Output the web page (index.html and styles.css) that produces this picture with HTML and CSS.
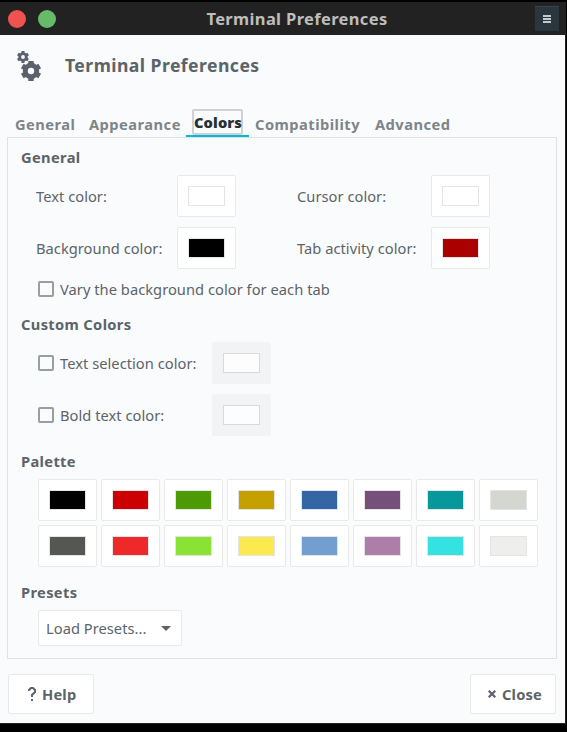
FILE: index.html
```html
<!DOCTYPE html>
<html lang="en">
<head>
<meta charset="utf-8">
<title>Terminal Preferences</title>
<link rel="stylesheet" href="styles.css">
</head>
<body>
<div class="window">
  <header class="titlebar">
    <div class="dots"><i class="dot red"></i><i class="dot green"></i></div>
    <span class="window-title">Terminal Preferences</span>
    <button class="menu-btn"><svg width="8" height="8"><path d="M0 1h8M0 4h8M0 7h8" stroke="#c4c8ca" stroke-width="2"/></svg></button>
  </header>
  <main class="content">
    <div class="heading">
      <svg class="gears" width="28" height="32" viewBox="0 0 28 32" fill="none" stroke="#5c616c">
        <circle cx="8" cy="7" r="3.3" stroke-width="2.8"/>
        <path d="M8 1v3M8 10v3M2.8 4l2.4 1.4M10.8 8.6l2.4 1.4M2.8 10l2.4-1.4M10.8 5.4l2.4-1.4" stroke-width="3"/>
        <circle cx="16" cy="21" r="5.7" stroke-width="5"/>
        <path d="M16 11v6M16 25v6M7.3 16l5 2.9M19.7 23.1l5 2.9M7.3 26l5-2.9M19.7 18.9l5-2.9" stroke-width="5.4"/>
      </svg>
      <h1>Terminal Preferences</h1>
    </div>
    <nav class="tabs">
      <span class="tab t-general">General</span>
      <span class="tab t-appearance">Appearance</span>
      <span class="tab active"><b>Colors</b></span>
      <span class="tab t-compat">Compatibility</span>
      <span class="tab t-advanced">Advanced</span>
    </nav>
    <section class="panel">
      <h2>General</h2>
      <div class="color-grid">
        <span>Text color:</span><button class="cb"><i class="white"></i></button>
        <span>Cursor color:</span><button class="cb"><i class="white"></i></button>
        <span>Background color:</span><button class="cb"><i class="black"></i></button>
        <span>Tab activity color:</span><button class="cb"><i class="darkred"></i></button>
      </div>
      <label class="check vary"><i class="box"></i><span>Vary the background color for each tab</span></label>
      <h2>Custom Colors</h2>
      <div class="custom">
        <label class="check"><i class="box"></i><span>Text selection color:</span></label><button class="cb off"><i></i></button>
        <label class="check"><i class="box"></i><span>Bold text color:</span></label><button class="cb off"><i></i></button>
      </div>
      <h2>Palette</h2>
      <div class="palette">
        <button class="cb"><i class="p0"></i></button><button class="cb"><i class="p1"></i></button><button class="cb"><i class="p2"></i></button><button class="cb"><i class="p3"></i></button><button class="cb"><i class="p4"></i></button><button class="cb"><i class="p5"></i></button><button class="cb"><i class="p6"></i></button><button class="cb"><i class="p7"></i></button>
        <button class="cb"><i class="p8"></i></button><button class="cb"><i class="p9"></i></button><button class="cb"><i class="p10"></i></button><button class="cb"><i class="p11"></i></button><button class="cb"><i class="p12"></i></button><button class="cb"><i class="p13"></i></button><button class="cb"><i class="p14"></i></button><button class="cb"><i class="p15"></i></button>
      </div>
      <h2>Presets</h2>
      <button class="select"><span>Load Presets...</span><svg width="10" height="5"><path d="M0 0h10L5 5z" fill="#5c616c"/></svg></button>
    </section>
    <footer class="actions">
      <button class="action"><svg width="8" height="14" fill="none" stroke="#5c616c" stroke-width="2"><path d="M1 4V3l2-2h2l2 2v2L4 8v2M3 13h2"/></svg><span>Help</span></button>
      <button class="action close"><svg width="8" height="8" stroke="#5c616c" stroke-width="2.2"><path d="M.7.7l6.6 6.6M7.3.7L.7 7.3"/></svg><span>Close</span></button>
    </footer>
  </main>
</div>
</body>
</html>
```
FILE: styles.css
```css
* { box-sizing: border-box; }
body { margin: 0; width: 567px; height: 732px; background: #000; overflow: hidden; font: 14.67px/20px "Noto Sans", "Open Sans", sans-serif; letter-spacing: 0.04px; color: #5c616c; }
h1, h2 { margin: 0; }
button { margin: 0; padding: 0; font: inherit; letter-spacing: inherit; color: inherit; background: #fff; border: 1px solid #e8eaea; border-radius: 2px; }
i { display: block; }
svg { display: block; flex: none; }
span { white-space: nowrap; }
.window { width: 566px; height: 724px; padding-top: 2px; background: #000; }
.titlebar { height: 33px; background: #222; display: grid; grid-template-columns: 83px 1fr 57px; align-items: center; padding: 0 6px 0 8px; }
.dots { display: flex; gap: 12px; }
.dot { width: 18px; height: 18px; border-radius: 50%; }
.red { background: #ef5350; }
.green { background: #66bb6a; }
.window-title { text-align: center; font-weight: 700; font-size: 16.5px; letter-spacing: 0.35px; color: #bdbdbd; }
.menu-btn { justify-self: end; width: 24px; height: 25px; margin-right: 1px; border: 0; border-top: 1px solid #37474f; border-radius: 0; background: #2a363d; display: grid; place-items: center; }
.content { height: 689px; border: solid #222; border-width: 0 1px 1px 0; background: #fafbfd; padding: 15px 8px 0 7px; color: #5b6467; }
.heading { height: 58px; display: flex; align-items: flex-start; padding-left: 8px; }
.heading h1 { margin-left: 22px; font-size: 17.6px; line-height: 30px; letter-spacing: 0.45px; }
.tabs { height: 29px; display: flex; padding-left: 8px; color: #7c8589; font-weight: 700; letter-spacing: 0.48px; }
.tab { padding-top: 6px; line-height: 20px; }
.t-general { width: 74px; }
.t-appearance { width: 97px; }
.tab.active { width: 63px; height: 29px; padding: 1px 0 0 6px; border-bottom: 2px solid #00bcd4; color: #263035; letter-spacing: 0.1px; }
.tab.active b { display: block; width: 51px; height: 26px; border: 2px solid #cfd1d4; border-radius: 2px; line-height: 23px; }
.t-compat { width: 126px; padding-left: 6px; }
.panel { height: 522px; border: 1px solid #dfe1e4; padding: 9px 0 0 13px; }
h2 { font-size: 14.67px; line-height: 20px; height: 21px; letter-spacing: 0.35px; }
.color-grid { display: grid; grid-template-columns: 141px 120px 134px 59px; grid-auto-rows: 42px; row-gap: 10px; align-items: center; margin: 7px 0 0 15px; }
.cb { width: 59px; height: 42px; display: grid; place-items: center; }
.cb i { width: 37px; height: 20px; border: 1px solid #e4e4e4; }
.white { background: #fff; }
.black, .p0 { background: #000; }
.darkred { background: #a00; }
.off { background: #f2f3f5; border-color: #f2f3f5; }
.off i { background: #fdfdfe; border-color: #d7d9dc; }
.check { display: flex; align-items: center; gap: 6px; height: 20px; }
.box { width: 16px; height: 16px; border: 2px solid #999f9f; border-radius: 2px; }
.vary { margin: 10px 0 15px 17px; }
.custom { display: grid; grid-template-columns: 174px 59px; grid-auto-rows: 42px; row-gap: 10px; align-items: center; margin: 7px 0 15px 17px; }
.palette { display: grid; grid-template-columns: repeat(8, 59px); gap: 4px; margin: 7px 0 15px 17px; }
.p1 { background: #c00; } .p2 { background: #4e9a06; } .p3 { background: #c4a000; }
.p4 { background: #3465a4; } .p5 { background: #75507b; } .p6 { background: #06989a; } .p7 { background: #d3d7cf; }
.p8 { background: #555753; } .p9 { background: #ef2929; } .p10 { background: #8ae234; } .p11 { background: #fce94f; }
.p12 { background: #729fcf; } .p13 { background: #ad7fa8; } .p14 { background: #34e2e2; } .p15 { background: #eeeeec; }
.select { width: 144px; height: 36px; margin: 7px 0 0 17px; padding: 0 10px 0 7px; display: flex; align-items: center; justify-content: space-between; }
.actions { display: flex; justify-content: space-between; padding: 15px 1px 0; }
.action { width: 86px; height: 40px; display: flex; align-items: center; padding-left: 19px; gap: 6px; font-weight: 700; letter-spacing: 0.2px; }
.close { padding-left: 17px; }
```
